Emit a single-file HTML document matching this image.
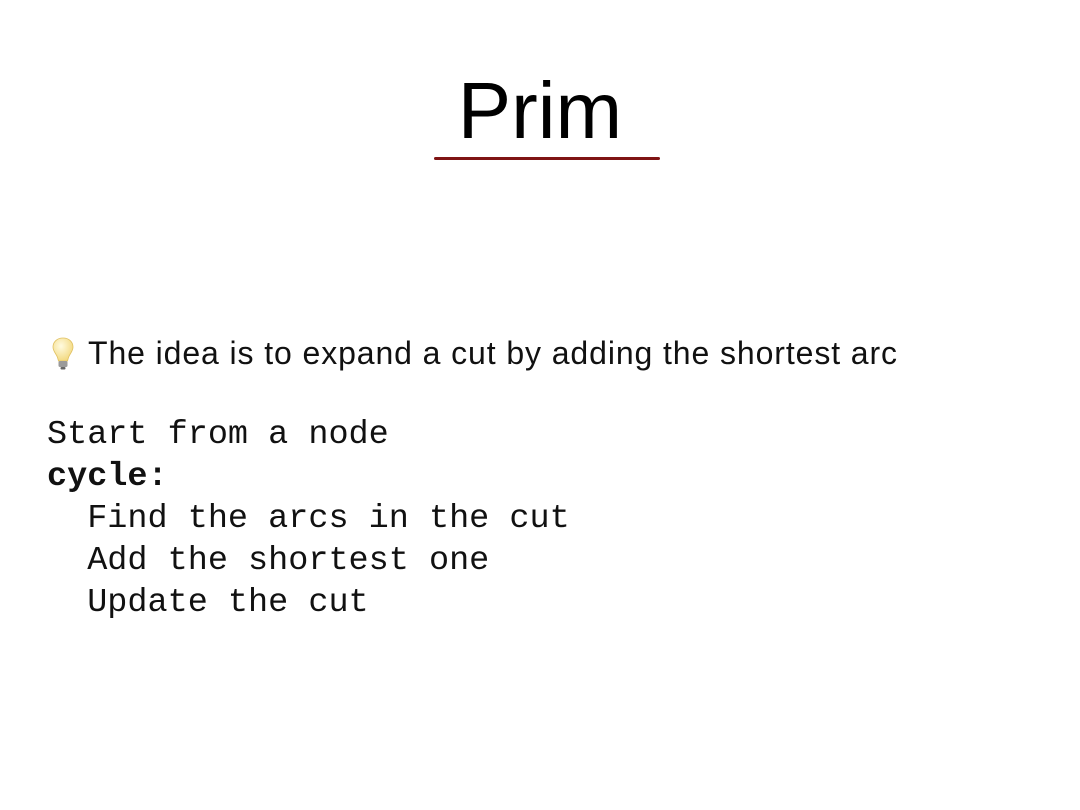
<!DOCTYPE html>
<html><head><style>
body{margin:0;width:1080px;height:810px;background:#fff;position:relative;overflow:hidden;font-family:"Liberation Sans",sans-serif;color:#000}
.t{position:absolute;left:0;width:1080px;text-align:center;top:66px;font-size:80px;line-height:90px;font-weight:300}
.line{position:absolute;left:434px;top:157px;width:226px;height:3px;background:#7f1414;border-radius:2px}
.idea{position:absolute;left:88px;top:333px;font-size:32px;line-height:40px;letter-spacing:0.9px;color:#111}
.bulb{position:absolute;left:50px;top:336px}
pre{position:absolute;left:47px;top:414px;margin:0;font-family:"Liberation Mono",monospace;font-size:33.5px;line-height:42px;color:#111}
</style></head><body>
<div class="t">Prim</div>
<div class="line"></div>
<svg class="bulb" width="26" height="36" viewBox="0 0 26 36">
<defs><radialGradient id="g" cx="0.4" cy="0.35" r="0.7"><stop offset="0" stop-color="#fffbe0"/><stop offset="1" stop-color="#f2d77a"/></radialGradient></defs>
<path d="M13 2C6.5 2 3 6.5 3 11c0 4.5 3.5 7 4.5 10.5L8.5 25h9l1-3.5C19.5 18 23 15.5 23 11 23 6.5 19.5 2 13 2z" fill="url(#g)" stroke="#e0c060" stroke-width="0.8"/>
<rect x="8.5" y="25" width="9" height="6" rx="1.5" fill="#9a9a9a"/>
<rect x="10.5" y="31" width="5" height="2.5" rx="1" fill="#666"/>
</svg>
<div class="idea">The idea is to expand a cut by adding the shortest arc</div>
<pre>Start from a node
<b>cycle:</b>
  Find the arcs in the cut
  Add the shortest one
  Update the cut</pre>
</body></html>
